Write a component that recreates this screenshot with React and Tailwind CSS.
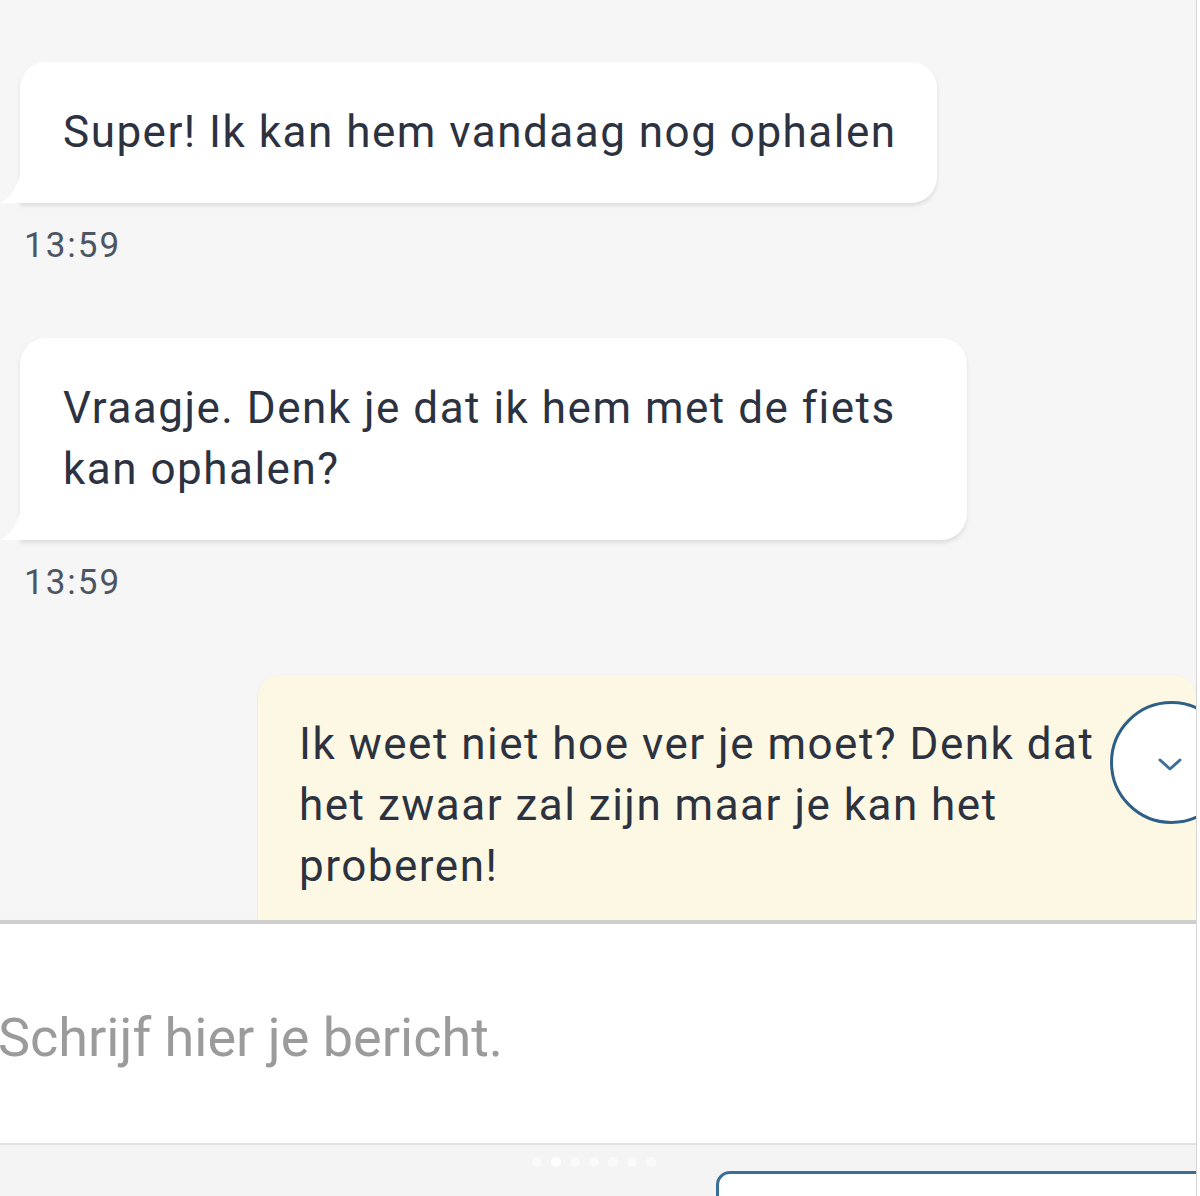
import React from 'react';

const font = { fontFamily: 'Roboto, "Noto Sans", sans-serif' };

const Tail = ({ color }) => (
  <svg className="absolute -left-[20px] bottom-0" width="21" height="30" viewBox="0 0 21 30">
    <path d="M21 0 L21 30 L0 30 Q14 24 21 0 Z" fill={color} />
  </svg>
);

const Incoming = ({ children, width }) => (
  <div className="ml-[20px]">
    <div
      className={`relative bg-white rounded-[26px] rounded-bl-none pl-[43px] pr-[40px] py-[40px] text-[44px] leading-[61px] tracking-[1.5px] text-[#2c3240] shadow-[0_3px_4px_rgba(0,0,0,0.10)] ${width}`}
    >
      <Tail color="#ffffff" />
      {children}
    </div>
  </div>
);

const Time = ({ children }) => (
  <div className="pl-[24px] mt-[23px] text-[35px] leading-[40px] tracking-[2px] text-[#4d5563]">{children}</div>
);

export default function App() {
  return (
    <div className="w-[1200px] h-[1196px] bg-white" style={font}>
      <div className="w-[1197px] h-[1196px] flex flex-col bg-[#f6f6f6] border-r border-[#d6d6d6] overflow-hidden">
        {/* Messages */}
        <div className="h-[920px] overflow-hidden pt-[62px]">
          <Incoming width="w-fit">Super! Ik kan hem vandaag nog ophalen</Incoming>
          <Time>13:59</Time>

          <div className="mt-[72px]">
            <Incoming width="w-[947px]">
              Vraagje. Denk je dat ik hem met de fiets
              <br />
              kan ophalen?
            </Incoming>
          </div>
          <Time>13:59</Time>

          <div className="mt-[72px] ml-[258px] relative">
            <div className="bg-[#fdf8e4] rounded-t-[22px] pl-[41px] pr-[90px] pt-[39px] pb-[40px] text-[44px] leading-[61px] tracking-[1.5px] text-[#2c3240] whitespace-nowrap shadow-[0_1px_3px_rgba(0,0,0,0.08)]">
              Ik weet niet hoe ver je moet? Denk dat
              <br />
              het zwaar zal zijn maar je kan het
              <br />
              proberen!
            </div>
            <div className="absolute left-[852px] top-[26px] w-[123px] h-[123px] rounded-full border-[3px] border-[#2e5f87] bg-white flex items-center justify-center">
              <svg width="26" height="15" viewBox="0 0 26 15" fill="none" className="-ml-[4px] mt-[4px]">
                <path d="M3 3 L13 12 L23 3" stroke="#3a6f9a" strokeWidth="3" strokeLinecap="round" strokeLinejoin="round" />
              </svg>
            </div>
          </div>
        </div>

        {/* Input */}
        <div className="h-[4px] bg-[#cfcfcf] shadow-[0_1px_2px_rgba(0,0,0,0.15)]" />
        <div className="h-[219px] bg-white flex items-center">
          <span className="-ml-[2px] mt-[8px] text-[54px] text-[#9b9b9b]">Schrijf hier je bericht.</span>
        </div>

        {/* Bottom bar */}
        <div className="flex-1 bg-[#f4f4f4] border-t-[2px] border-[#e2e2e2] relative">
          <div className="flex gap-[9px] ml-[532px] mt-[12px]">
            {[0, 1, 2, 3, 4, 5, 6].map((i) => (
              <div key={i} className={`w-[10px] h-[10px] rounded-full ${i === 1 ? 'bg-white' : 'bg-[#fafafa]'}`} />
            ))}
          </div>
          <div className="absolute left-[716px] top-[26px] w-[520px] h-[60px] rounded-[14px] border-[3px] border-[#3b6e96] bg-white" />
        </div>
      </div>
    </div>
  );
}
